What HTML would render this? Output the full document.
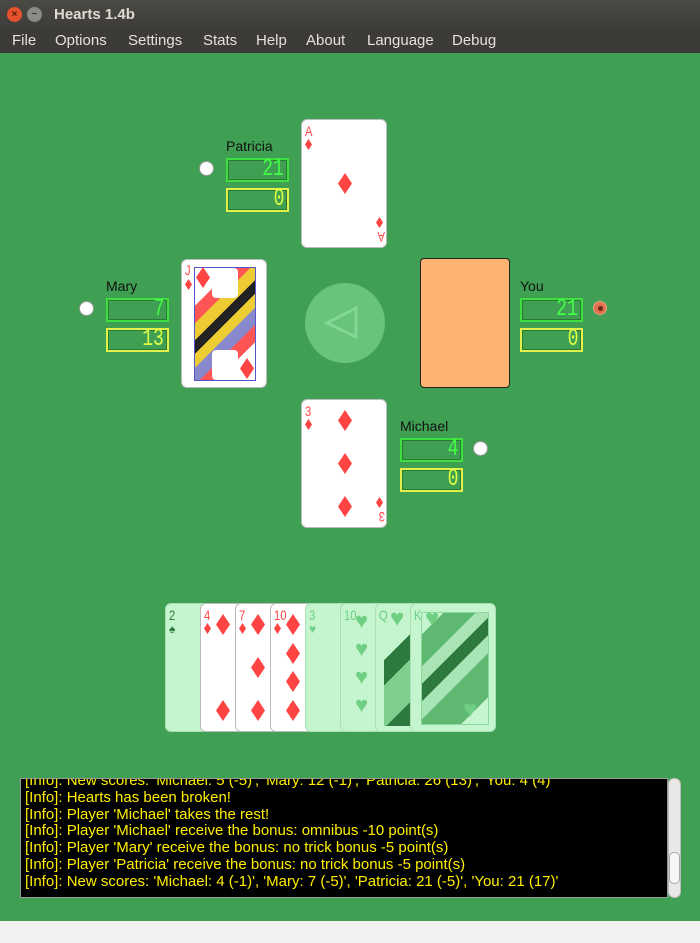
<!DOCTYPE html>
<html><head><meta charset="utf-8"><style>
*{margin:0;padding:0;box-sizing:border-box}
body{width:700px;height:943px;overflow:hidden;background:#f2f1f0;font-family:"Liberation Sans",sans-serif;position:relative}
.abs{position:absolute}
#title{left:0;top:0;width:700px;height:28px;background:linear-gradient(#4a4944,#3e3d39);color:#dfdbd2;font-weight:bold;font-size:15px}
#menu{left:0;top:28px;width:700px;height:25px;background:#3c3b37;color:#e6e2da;font-size:15px}
#menu span{position:absolute;top:4px}
#table{left:0;top:53px;width:700px;height:868px;background:#3f9f53}
.card{position:absolute;width:86px;height:129px;background:#fff;border-radius:6px;border:1px solid #bbb;overflow:hidden}
.rk{position:absolute;font-size:14px;color:#f44;font-family:"Liberation Sans Narrow","Liberation Sans",sans-serif;transform:scaleX(.8);transform-origin:left top}
.name{position:absolute;font-size:14px;color:#111}
.lcd{position:absolute;width:63px;height:24px;border:2px solid #3fdf3f;box-shadow:inset 0 0 0 1px #2a7a34;color:#4f4;font-family:"Liberation Mono",monospace;font-size:24px;text-align:right;line-height:20px;padding-right:3px;transform-origin:right}
.lcd span{display:inline-block;transform:scaleX(.75);transform-origin:right}
.lcd.y{border-color:#e2f04a;color:#df4}
.dot{position:absolute;width:15px;height:15px;border-radius:50%;background:#fff;border:1px solid #999}
.fade{background:#c5f5cf;border-color:#a8e0b4}
#log{left:20px;top:778px;width:648px;height:120px;background:#000;border:1px solid #999;color:#ffee00;font-size:15px;line-height:16.8px;padding-left:4px;overflow:hidden}
#log div{white-space:nowrap;transform:scaleX(1.0);transform-origin:left}
</style></head><body>
<div id="title" class="abs">
 <div class="abs" style="left:7px;top:7px;width:15px;height:15px;border-radius:50%;background:#e5532d;color:#5a1a0a;font-size:10px;text-align:center;line-height:15px">×</div>
 <div class="abs" style="left:27px;top:7px;width:15px;height:15px;border-radius:50%;background:#8b8a85;color:#3c3b37;font-size:10px;text-align:center;line-height:14px">–</div>
 <div class="abs" style="left:54px;top:6px">Hearts 1.4b</div>
</div>
<div id="menu" class="abs">
 <span style="left:12px">File</span><span style="left:55px">Options</span><span style="left:128px">Settings</span><span style="left:203px">Stats</span><span style="left:256px">Help</span><span style="left:306px">About</span><span style="left:367px">Language</span><span style="left:452px">Debug</span>
</div>
<div id="table" class="abs"></div>

<!-- Patricia -->
<div class="name" style="left:226px;top:138px">Patricia</div>
<div class="lcd" style="left:226px;top:158px"><span>21</span></div>
<div class="lcd y" style="left:226px;top:188px"><span>0</span></div>
<div class="dot" style="left:199px;top:161px"></div>
<div class="card" style="left:301px;top:119px">
 <div class="rk" style="left:3px;top:3px">A</div>
 <svg class="abs" style="left:3px;top:19px" width="7" height="11"><polygon points="3.5,0 7,5.5 3.5,11 0,5.5" fill="#f44"/></svg>
 <svg class="abs" style="left:36px;top:53px" width="14" height="21"><polygon points="7,0 14,10.5 7,21 0,10.5" fill="#f44"/></svg>
 <svg class="abs" style="left:74px;top:97px" width="7" height="11"><polygon points="3.5,0 7,5.5 3.5,11 0,5.5" fill="#f44"/></svg>
 <div class="rk" style="left:83px;top:125px;transform:rotate(180deg) scaleX(.8)">A</div>
</div>

<!-- Mary -->
<div class="name" style="left:106px;top:278px">Mary</div>
<div class="lcd" style="left:106px;top:298px"><span>7</span></div>
<div class="lcd y" style="left:106px;top:328px"><span>13</span></div>
<div class="dot" style="left:79px;top:301px"></div>
<div class="card" style="left:181px;top:259px">
 <div class="abs" style="left:12px;top:7px;width:62px;height:114px;border:1px solid #55c;background:linear-gradient(135deg,#fff 0 22%,#f55 22% 32%,#ec3 32% 42%,#222 42% 50%,#ec3 50% 58%,#88c 58% 68%,#f55 68% 78%,#fff 78%)"></div>
 <div class="abs" style="left:30px;top:8px;width:26px;height:30px;background:#fff;border-radius:4px"></div>
 <div class="abs" style="left:30px;top:90px;width:26px;height:30px;background:#fff;border-radius:4px"></div>
 <div class="rk" style="left:3px;top:2px">J</div>
 <svg class="abs" style="left:3px;top:19px" width="7" height="11"><polygon points="3.5,0 7,5.5 3.5,11 0,5.5" fill="#f44"/></svg>
 <svg class="abs" style="left:14px;top:7px" width="14" height="21"><polygon points="7,0 14,10.5 7,21 0,10.5" fill="#f44"/></svg>
 <svg class="abs" style="left:58px;top:98px" width="14" height="21"><polygon points="7,0 14,10.5 7,21 0,10.5" fill="#f44"/></svg>
</div>

<!-- center -->
<div class="abs" style="left:305px;top:283px;width:80px;height:80px;border-radius:50%;background:#67c47a"></div>
<svg class="abs" style="left:320px;top:300px" width="45" height="45"><polygon points="7,23 36,8 36,37" fill="none" stroke="#82d794" stroke-width="3"/></svg>

<!-- You -->
<div class="abs" style="left:420px;top:258px;width:90px;height:130px;background:#fdb373;border:1px solid #222;border-radius:4px"></div>
<div class="name" style="left:520px;top:278px">You</div>
<div class="lcd" style="left:520px;top:298px"><span>21</span></div>
<div class="lcd y" style="left:520px;top:328px"><span>0</span></div>
<div class="abs" style="left:593px;top:301px;width:14px;height:14px;border-radius:50%;background:#e07050;border:1px solid #f0a080"><div class="abs" style="left:4px;top:4px;width:5px;height:5px;border-radius:50%;background:#6a2a1a"></div></div>

<!-- Michael -->
<div class="card" style="left:301px;top:399px">
 <div class="rk" style="left:3px;top:3px">3</div>
 <svg class="abs" style="left:3px;top:19px" width="7" height="11"><polygon points="3.5,0 7,5.5 3.5,11 0,5.5" fill="#f44"/></svg>
 <svg class="abs" style="left:36px;top:10px" width="14" height="21"><polygon points="7,0 14,10.5 7,21 0,10.5" fill="#f44"/></svg>
 <svg class="abs" style="left:36px;top:53px" width="14" height="21"><polygon points="7,0 14,10.5 7,21 0,10.5" fill="#f44"/></svg>
 <svg class="abs" style="left:36px;top:96px" width="14" height="21"><polygon points="7,0 14,10.5 7,21 0,10.5" fill="#f44"/></svg>
 <svg class="abs" style="left:74px;top:97px" width="7" height="11"><polygon points="3.5,0 7,5.5 3.5,11 0,5.5" fill="#f44"/></svg>
 <div class="rk" style="left:83px;top:125px;transform:rotate(180deg) scaleX(.8)">3</div>
</div>
<div class="name" style="left:400px;top:418px">Michael</div>
<div class="lcd" style="left:400px;top:438px"><span>4</span></div>
<div class="lcd y" style="left:400px;top:468px"><span>0</span></div>
<div class="dot" style="left:473px;top:441px"></div>

<!-- Hand -->
<div class="card fade" style="left:165px;top:603px"><div class="rk" style="left:3px;top:3px;color:#2d7a3d">2</div><div class="abs" style="left:3px;top:18px;color:#2d7a3d;font-size:12px">♠</div></div>
<div class="card" style="left:200px;top:603px"><div class="rk" style="left:3px;top:3px">4</div>
 <svg class="abs" style="left:3px;top:19px" width="7" height="11"><polygon points="3.5,0 7,5.5 3.5,11 0,5.5" fill="#f44"/></svg>
 <svg class="abs" style="left:15px;top:10px" width="14" height="21"><polygon points="7,0 14,10.5 7,21 0,10.5" fill="#f44"/></svg>
 <svg class="abs" style="left:15px;top:96px" width="14" height="21"><polygon points="7,0 14,10.5 7,21 0,10.5" fill="#f44"/></svg></div>
<div class="card" style="left:235px;top:603px"><div class="rk" style="left:3px;top:3px">7</div>
 <svg class="abs" style="left:3px;top:19px" width="7" height="11"><polygon points="3.5,0 7,5.5 3.5,11 0,5.5" fill="#f44"/></svg>
 <svg class="abs" style="left:15px;top:10px" width="14" height="21"><polygon points="7,0 14,10.5 7,21 0,10.5" fill="#f44"/></svg>
 <svg class="abs" style="left:15px;top:53px" width="14" height="21"><polygon points="7,0 14,10.5 7,21 0,10.5" fill="#f44"/></svg>
 <svg class="abs" style="left:15px;top:96px" width="14" height="21"><polygon points="7,0 14,10.5 7,21 0,10.5" fill="#f44"/></svg></div>
<div class="card" style="left:270px;top:603px"><div class="rk" style="left:3px;top:3px">10</div>
 <svg class="abs" style="left:3px;top:19px" width="7" height="11"><polygon points="3.5,0 7,5.5 3.5,11 0,5.5" fill="#f44"/></svg>
 <svg class="abs" style="left:15px;top:10px" width="14" height="21"><polygon points="7,0 14,10.5 7,21 0,10.5" fill="#f44"/></svg>
 <svg class="abs" style="left:15px;top:39px" width="14" height="21"><polygon points="7,0 14,10.5 7,21 0,10.5" fill="#f44"/></svg>
 <svg class="abs" style="left:15px;top:67px" width="14" height="21"><polygon points="7,0 14,10.5 7,21 0,10.5" fill="#f44"/></svg>
 <svg class="abs" style="left:15px;top:96px" width="14" height="21"><polygon points="7,0 14,10.5 7,21 0,10.5" fill="#f44"/></svg></div>
<div class="card fade" style="left:305px;top:603px"><div class="rk" style="left:3px;top:3px;color:#6fcf83">3</div><div class="abs" style="left:3px;top:18px;color:#6fcf83;font-size:12px">♥</div></div>
<div class="card fade" style="left:340px;top:603px"><div class="rk" style="left:3px;top:3px;color:#6fcf83">10</div>
 <div class="abs" style="left:14px;top:3px;color:#6fcf83;font-size:22px;line-height:28px">♥<br>♥<br>♥<br>♥</div></div>
<div class="card fade" style="left:375px;top:603px"><div class="rk" style="left:3px;top:3px;color:#6fcf83">Q</div>
 <div class="abs" style="left:8px;top:22px;width:70px;height:100px;background:linear-gradient(135deg,#c5f5cf 0 20%,#2e7a3e 20% 35%,#7fd08f 35% 60%,#2e7a3e 60% 75%,#c5f5cf 75%)"></div>
 <div class="abs" style="left:14px;top:1px;color:#6fcf83;font-size:24px">♥</div></div>
<div class="card fade" style="left:410px;top:603px"><div class="rk" style="left:3px;top:3px;color:#6fcf83">K</div>
 <div class="abs" style="left:10px;top:8px;width:68px;height:113px;border:1px solid #8fd89f;background:linear-gradient(135deg,#c5f5cf 0 12%,#5fb872 12% 30%,#a8e4b5 30% 40%,#2e7a3e 40% 50%,#a8e4b5 50% 60%,#5fb872 60% 85%,#c5f5cf 85%)"></div>
 <div class="abs" style="left:14px;top:1px;color:#6fcf83;font-size:24px">♥</div>
 <div class="abs" style="left:52px;top:92px;color:#6fcf83;font-size:24px">♥</div></div>

<!-- Log -->
<div id="log" class="abs">
 <div style="margin-top:-6px">[Info]: New scores: 'Michael: 5 (-5)', 'Mary: 12 (-1)', 'Patricia: 26 (13)', 'You: 4 (4)'</div>
 <div>[Info]: Hearts has been broken!</div>
 <div>[Info]: Player 'Michael' takes the rest!</div>
 <div>[Info]: Player 'Michael' receive the bonus: omnibus -10 point(s)</div>
 <div>[Info]: Player 'Mary' receive the bonus: no trick bonus -5 point(s)</div>
 <div>[Info]: Player 'Patricia' receive the bonus: no trick bonus -5 point(s)</div>
 <div>[Info]: New scores: 'Michael: 4 (-1)', 'Mary: 7 (-5)', 'Patricia: 21 (-5)', 'You: 21 (17)'</div>
</div>
<div class="abs" style="left:668px;top:778px;width:13px;height:120px;background:#e8e8e6;border:1px solid #bbb;border-radius:6px"></div>
<div class="abs" style="left:669px;top:852px;width:11px;height:32px;background:#f6f6f4;border:1px solid #aaa;border-radius:5px"></div>
</body></html>
